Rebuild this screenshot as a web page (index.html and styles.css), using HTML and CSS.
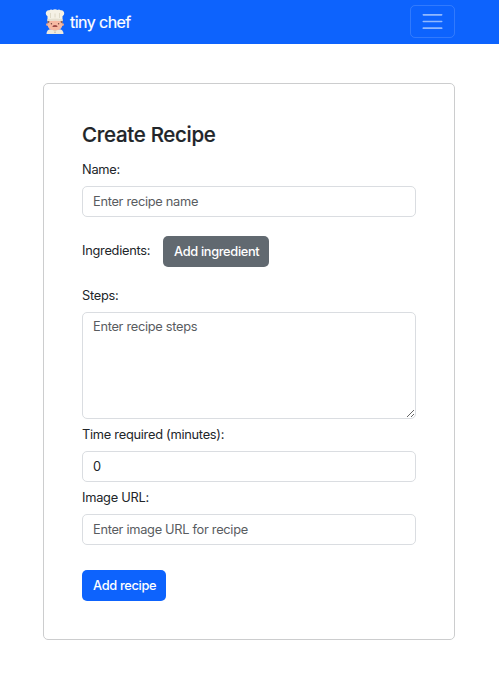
FILE: index.html
```
<!DOCTYPE html>
<html lang="en">
<head>
<meta charset="utf-8">
<title>tiny chef</title>
<link rel="stylesheet" href="styles.css">
</head>
<body>
<nav class="navbar">
  <a class="brand" href="#">
    <svg class="logo" viewBox="0 0 20 26" aria-hidden="true">
      <path d="M1.5 25q0-4.8 4.5-4.8h8q4.500 0 4.500 4.800z" fill="#eee9dc"/>
      <path d="M7 20h6l-3 3z" fill="#d9d2bf"/>
      <circle cx="2.400" cy="15.600" r="1.400" fill="#e9a48e"/>
      <circle cx="17.600" cy="15.600" r="1.400" fill="#e9a48e"/>
      <path d="M2.700 11h14.600v5.300q0 5-7.300 5t-7.300-5z" fill="#f7b9a2"/>
      <path d="M2.700 11h1.600v2.600l-1.600 1zM17.300 11h-1.600v2.600l1.600 1z" fill="#94634f"/>
      <circle cx="6.400" cy="14.700" r=".7" fill="#70463e"/>
      <circle cx="13.600" cy="14.700" r=".7" fill="#70463e"/>
      <path d="M7.400 18q0-2 2.600-2t2.600 2z" fill="#9b4945"/>
      <path d="M2.500 12V7.200Q.2 5.800 1 3.200 1.800.8 4.300 1.300 6-.1 7.500 1 10-.5 12.500 1q1.600-1.100 3.200.3 2.500-.5 3.300 1.900.8 2.600-1.500 4V12q-7.500-1.200-15 0z" fill="#f5f1e5"/>
      <path d="M5.500 4v5M10 4.500v4M14.500 4v5" stroke="#d8d3bf" stroke-width=".8" fill="none"/>
      <path d="M2.500 10q7.500-1 15 0v2q-7.500-1-15 0z" fill="#e5dfcf"/>
      <circle cx="10" cy="23.400" r=".6" fill="#b8ad99"/>
    </svg>
    <span class="brand-name">tiny chef</span>
  </a>
  <button class="toggler" type="button" aria-label="Toggle navigation">
    <svg class="bars" viewBox="0 0 30 30"><path stroke="rgba(255,255,255,.55)" stroke-linecap="round" stroke-miterlimit="10" stroke-width="2" d="M4 7h22M4 15h22M4 23h22"/></svg>
  </button>
</nav>
<form class="card">
  <h1 class="title">Create Recipe</h1>
  <label class="label" for="name">Name:</label>
  <input class="control" id="name" placeholder="Enter recipe name">
  <div class="ingredients">
    <span class="label">Ingredients:</span>
    <button class="btn secondary" type="button">Add ingredient</button>
  </div>
  <label class="label" for="steps">Steps:</label>
  <textarea class="control steps" id="steps" placeholder="Enter recipe steps"></textarea>
  <label class="label" for="time">Time required (minutes):</label>
  <input class="control" id="time" value="0">
  <label class="label" for="image">Image URL:</label>
  <input class="control" id="image" placeholder="Enter image URL for recipe">
  <button class="btn primary" type="button">Add recipe</button>
</form>
</body>
</html>
```
FILE: styles.css
```
* { box-sizing: border-box; }
body {
  margin: 0;
  background: #fff;
  color: #212529;
  font-family: Inter, "Liberation Sans", sans-serif;
  font-size: 12.8px;
}
.navbar {
  display: flex;
  align-items: center;
  justify-content: space-between;
  height: 44px;
  padding: 0 44px 0 45px;
  background: #0d63fd;
}
.brand {
  display: flex;
  align-items: center;
  gap: 5px;
  color: #fff;
  text-decoration: none;
}
.logo { width: 20px; height: 26px; }
.brand-name { font-size: 16px; line-height: 24px; letter-spacing: -.55px; -webkit-text-stroke: .2px; }
.toggler {
  display: flex;
  align-items: center;
  justify-content: center;
  width: 45px;
  height: 33px;
  margin-top: -1px;
  padding: 0;
  background: none;
  border: 1px solid rgba(255, 255, 255, .15);
  border-radius: 5px;
}
.bars { width: 25px; height: 25px; fill: none; }
.card {
  display: flex;
  flex-direction: column;
  align-items: flex-start;
  width: 412px;
  height: 557px;
  margin: 39px 0 0 43px;
  padding: 38px;
  border: 1px solid #cccdce;
  border-radius: 5px;
}
.title {
  margin: 0 0 13px;
  font-size: 20.5px;
  line-height: 25px;
  font-weight: 500;
  letter-spacing: -.3px;
  -webkit-text-stroke: .2px;
}
.label { line-height: 20px; margin-bottom: 6px; letter-spacing: -.26px; }
.control {
  display: block;
  width: 334px;
  height: 31px;
  margin: 0 0 6px;
  padding: 4px 10px;
  font: inherit;
  line-height: 20px;
  letter-spacing: -.29px;
  color: #212529;
  background: #fff;
  border: 1px solid #dadde1;
  border-radius: 5px;
}
.control::placeholder { color: #595c5f; opacity: 1; }
.steps { height: 107px; resize: vertical; }
.ingredients {
  display: flex;
  align-items: center;
  gap: 13px;
  height: 31px;
  margin: 13px 0 19px;
}
.ingredients .label { width: 68px; margin: 0 0 2px; white-space: nowrap; }
.btn {
  height: 31px;
  padding: 0 0 0 11px;
  border: 0;
  border-radius: 5px;
  color: #fff;
  font: inherit;
  font-weight: 500;
  line-height: 20px;
  letter-spacing: -.33px;
  text-align: left;
  white-space: nowrap;
}
.secondary { width: 106px; background: #616970; }
.primary { width: 84px; margin-top: 19px; background: #0d63fd; }
```
